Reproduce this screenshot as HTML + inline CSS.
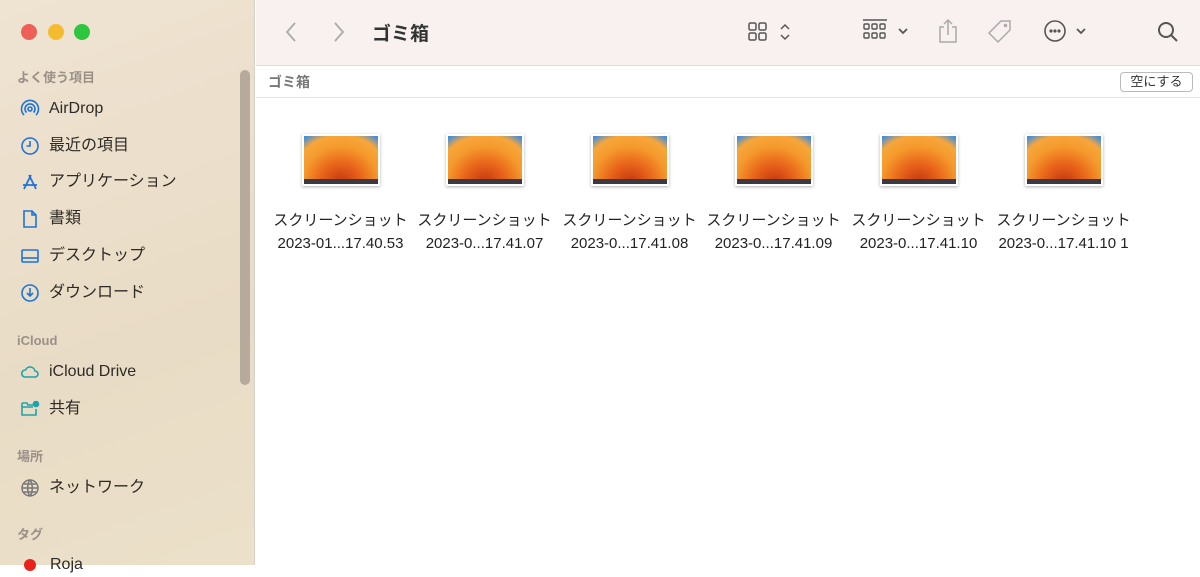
<!DOCTYPE html>
<html><head><meta charset="utf-8"><style>
*{margin:0;padding:0;box-sizing:border-box}
body{width:1200px;height:565px;overflow:hidden;font-family:"Liberation Sans","Noto Sans CJK JP",sans-serif;position:relative;background:#fff}
.sb{position:absolute;left:0;top:0;width:255px;height:565px;background:linear-gradient(160deg,#efe3d2,#e9dcc6 60%,#ebe0c9);border-right:1px solid #d8d0c6}
.dot{position:absolute;top:24px;width:16px;height:16px;border-radius:50%}
.h{position:absolute;left:17px;font-size:13px;color:#9a9088;font-weight:bold;height:20px;line-height:20px}
.it{position:absolute;left:20px;font-size:16px;color:#2e2a26;display:flex;align-items:center;height:24px;line-height:24px}
.it svg{width:20px;height:20px;margin-right:9px;flex:none}
.scroll{position:absolute;left:240px;top:70px;width:10px;height:315px;border-radius:5px;background:#b6aa9c}
.tb{position:absolute;left:256px;top:0;right:0;height:66px;background:#f9f1ef;border-bottom:1px solid #e2dcda}
.pb{position:absolute;left:256px;top:66px;right:0;height:32px;background:#fff;border-bottom:1px solid #e3e3e3}
.f{position:absolute;top:134px;width:145px;text-align:center}
.th{width:78px;height:52px;margin:0 auto;background:#fff;padding:2px;box-shadow:0 1px 3px rgba(0,0,0,.3)}
.img{width:100%;height:100%;position:relative;background:radial-gradient(ellipse 80% 120% at 50% 100%,#c2330f 0,#e8631a 35%,#f59a2c 65%,#f6a63c 85%,#4a8fd6 100%);overflow:hidden}
.img:after{content:"";position:absolute;left:0;right:0;bottom:0;height:5px;background:#3a3a44}
.lb{font-size:15px;color:#222;line-height:23px;margin-top:23px;white-space:nowrap}
</style></head><body>
<div class="sb">
<div class="dot" style="left:21px;background:#ed5f57"></div>
<div class="dot" style="left:48px;background:#f5bb2f"></div>
<div class="dot" style="left:74px;background:#2ec640"></div>
<div class="h" style="top:68px">よく使う項目</div>
<div class="it" style="top:97px"><svg viewBox="0 0 20 20" fill="none" stroke="#1e74d8" stroke-width="1.6"><circle cx="10" cy="10" r="2"/><path d="M6.5 13.5a5 5 0 1 1 7 0M4 16a8.5 8.5 0 1 1 12 0"/></svg>AirDrop</div>
<div class="it" style="top:134px"><svg viewBox="0 0 20 20" fill="none" stroke="#1e74d8" stroke-width="1.6"><circle cx="10" cy="10" r="8"/><path d="M10 5v5H6.5"/></svg>最近の項目</div>
<div class="it" style="top:170px"><svg viewBox="0 0 20 20" fill="none" stroke="#1e74d8" stroke-width="1.8"><path d="M9 3l7 14M11 3L4 17M3 13h14"/></svg>アプリケーション</div>
<div class="it" style="top:207px"><svg viewBox="0 0 20 20" fill="none" stroke="#1e74d8" stroke-width="1.6"><path d="M4 2h8l4 4v12H4zM12 2v4h4"/></svg>書類</div>
<div class="it" style="top:244px"><svg viewBox="0 0 20 20" fill="none" stroke="#1e74d8" stroke-width="1.6"><rect x="2" y="4" width="16" height="12" rx="1"/><path d="M2 12h16"/></svg>デスクトップ</div>
<div class="it" style="top:281px"><svg viewBox="0 0 20 20" fill="none" stroke="#1e74d8" stroke-width="1.6"><circle cx="10" cy="10" r="8"/><path d="M10 5v8M7 10l3 3 3-3"/></svg>ダウンロード</div>
<div class="h" style="top:331px">iCloud</div>
<div class="it" style="top:360px"><svg viewBox="0 0 20 20" fill="none" stroke="#1ea4a8" stroke-width="1.6"><path d="M5 15h10a3 3 0 0 0 0-6 5 5 0 0 0-9.5-1A3.5 3.5 0 0 0 5 15z"/></svg>iCloud Drive</div>
<div class="it" style="top:397px"><svg viewBox="0 0 20 20" fill="none" stroke="#1ea4a8" stroke-width="1.6"><path d="M2 4h5l1 2h5M2 4v12h14v-6M2 8h11"/><circle cx="16" cy="5" r="2.5" fill="#1ea4a8"/></svg>共有</div>
<div class="h" style="top:447px">場所</div>
<div class="it" style="top:476px"><svg viewBox="0 0 20 20" fill="none" stroke="#777" stroke-width="1.5"><circle cx="10" cy="10" r="8"/><path d="M2 10h16M10 2c-3 3-3 13 0 16M10 2c3 3 3 13 0 16M4 6h12M4 14h12"/></svg>ネットワーク</div>
<div class="h" style="top:525px">タグ</div>
<div class="it" style="top:553px"><span style="width:12px;height:12px;border-radius:50%;background:#e8231c;margin:0 14px 0 4px"></span>Roja</div>
<div class="scroll"></div>
</div>
<div class="tb">
<svg style="position:absolute;left:28px;top:21px" width="14" height="22" viewBox="0 0 14 22" fill="none" stroke="#aaa" stroke-width="1.8"><path d="M11 2L3 11l8 9"/></svg>
<svg style="position:absolute;left:76px;top:21px" width="14" height="22" viewBox="0 0 14 22" fill="none" stroke="#aaa" stroke-width="1.8"><path d="M3 2l8 9-8 9"/></svg>
<div style="position:absolute;left:116px;top:19px;font-size:19px;font-weight:bold;color:#333">ゴミ箱</div>
<svg style="position:absolute;left:492px;top:20px" width="50" height="24" viewBox="0 0 50 24" fill="none" stroke="#555" stroke-width="1.5"><rect x="1" y="3" width="7" height="7" rx="1.5"/><rect x="11" y="3" width="7" height="7" rx="1.5"/><rect x="1" y="13" width="7" height="7" rx="1.5"/><rect x="11" y="13" width="7" height="7" rx="1.5"/><path d="M33 9l4-4 4 4M33 15l4 4 4-4"/></svg>
<svg style="position:absolute;left:606px;top:18px" width="50" height="26" viewBox="0 0 50 26" fill="none" stroke="#555" stroke-width="1.4"><path d="M1 2h24"/><rect x="2" y="6" width="5" height="5" rx="1"/><rect x="10" y="6" width="5" height="5" rx="1"/><rect x="18" y="6" width="5" height="5" rx="1"/><rect x="2" y="15" width="5" height="5" rx="1"/><rect x="10" y="15" width="5" height="5" rx="1"/><rect x="18" y="15" width="5" height="5" rx="1"/><path d="M37 11l4 4 4-4" stroke-width="1.8"/></svg>
<svg style="position:absolute;left:680px;top:17px" width="24" height="28" viewBox="0 0 24 28" fill="none" stroke="#aaa" stroke-width="1.5"><path d="M8 10H4v15h16V10h-4M12 3v15M8 7l4-4 4 4"/></svg>
<svg style="position:absolute;left:730px;top:18px" width="28" height="28" viewBox="0 0 28 28" fill="none" stroke="#aaa" stroke-width="1.5"><path d="M15 3h9v9L12 24 3 15z"/><circle cx="19.5" cy="7.5" r="1"/></svg>
<svg style="position:absolute;left:786px;top:19px" width="50" height="26" viewBox="0 0 50 26" fill="none" stroke="#555" stroke-width="1.6"><circle cx="13" cy="12" r="10"/><circle cx="9" cy="12" r=".8" fill="#555"/><circle cx="13" cy="12" r=".8" fill="#555"/><circle cx="17" cy="12" r=".8" fill="#555"/><path d="M35 10l4 4 4-4" stroke-width="1.8"/></svg>
<svg style="position:absolute;left:900px;top:20px" width="24" height="24" viewBox="0 0 24 24" fill="none" stroke="#555" stroke-width="2"><circle cx="10" cy="10" r="7"/><path d="M15 15l6 6"/></svg>
</div>
<div class="pb">
<div style="position:absolute;left:12px;top:6px;font-size:14px;font-weight:bold;color:#777">ゴミ箱</div>
<div style="position:absolute;right:7px;top:6px;width:73px;height:20px;border:1px solid #bbb;border-radius:4px;font-size:13px;color:#333;text-align:center;line-height:18px;background:#fff">空にする</div>
</div>
<div class="f" style="left:268px"><div class="th"><div class="img"></div></div><div class="lb">スクリーンショット<br>2023-01...17.40.53</div></div>
<div class="f" style="left:412px"><div class="th"><div class="img"></div></div><div class="lb">スクリーンショット<br>2023-0...17.41.07</div></div>
<div class="f" style="left:557px"><div class="th"><div class="img"></div></div><div class="lb">スクリーンショット<br>2023-0...17.41.08</div></div>
<div class="f" style="left:701px"><div class="th"><div class="img"></div></div><div class="lb">スクリーンショット<br>2023-0...17.41.09</div></div>
<div class="f" style="left:846px"><div class="th"><div class="img"></div></div><div class="lb">スクリーンショット<br>2023-0...17.41.10</div></div>
<div class="f" style="left:991px"><div class="th"><div class="img"></div></div><div class="lb">スクリーンショット<br>2023-0...17.41.10 1</div></div>
</body></html>
